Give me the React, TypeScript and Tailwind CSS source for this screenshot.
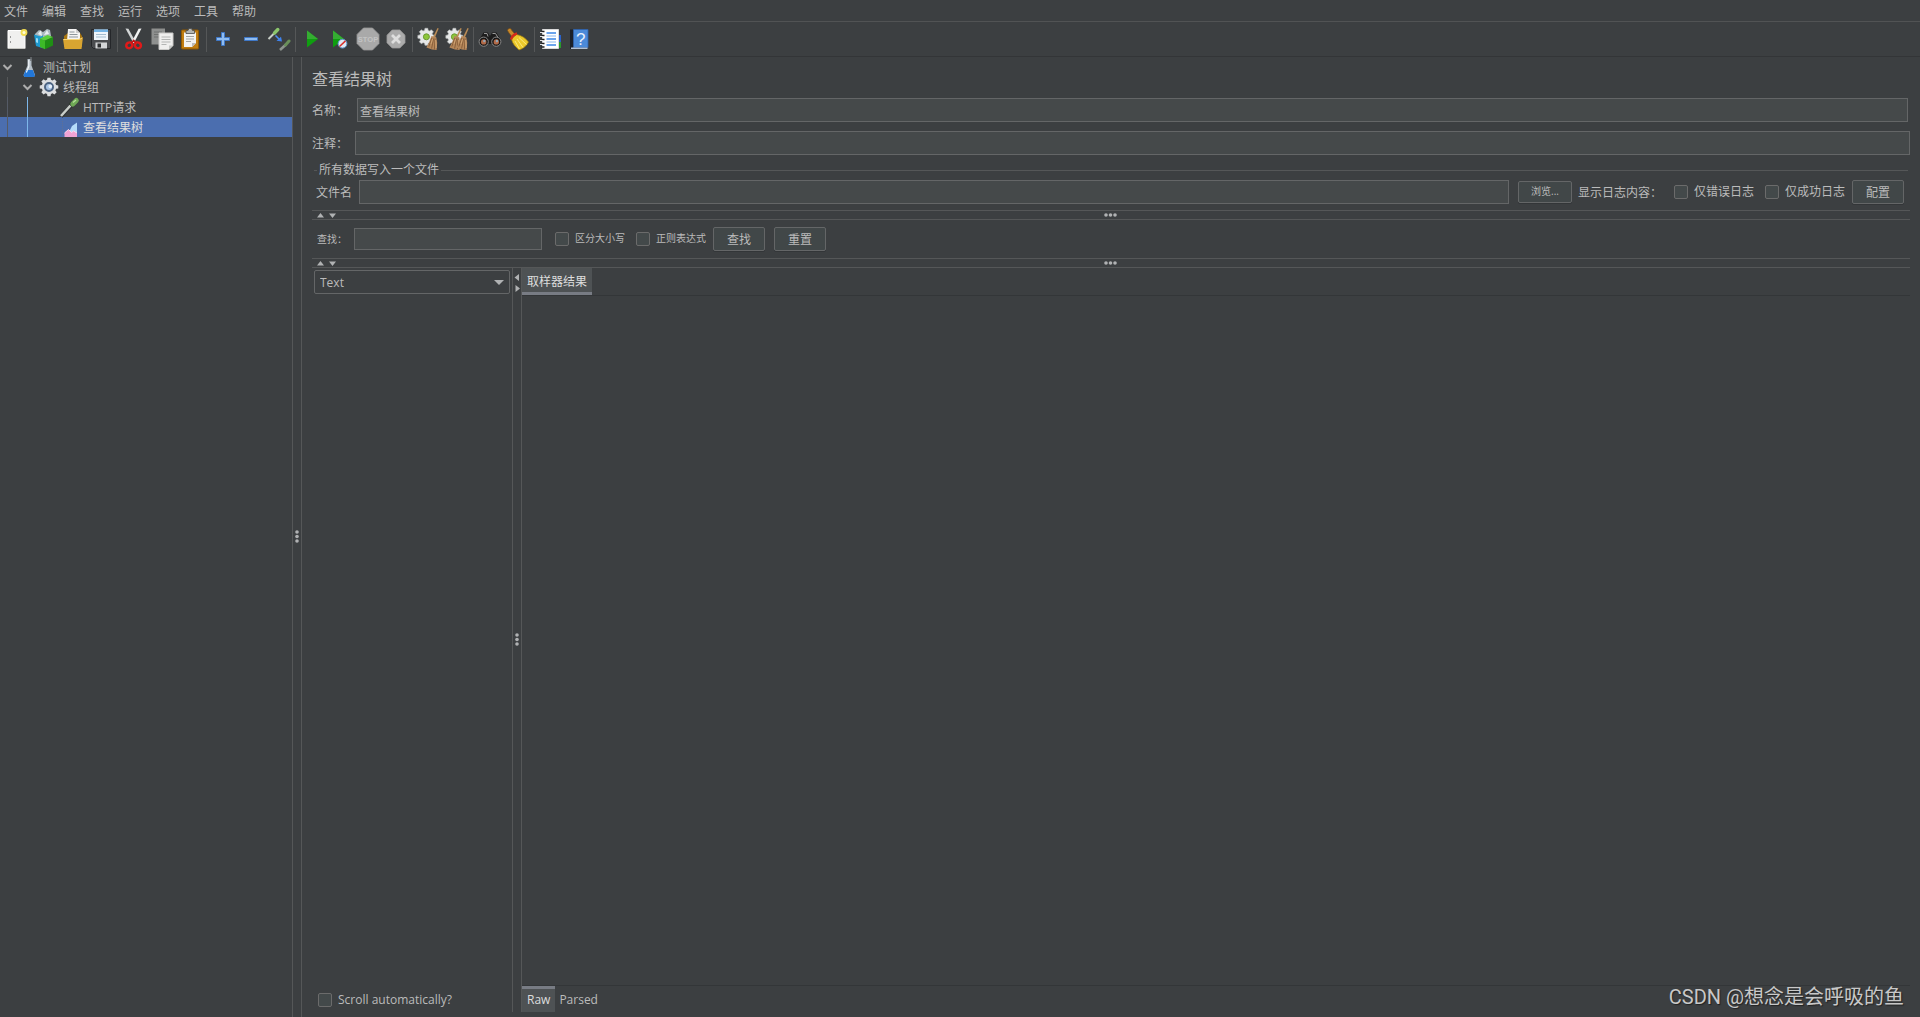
import type { ReactNode } from 'react';

type IconProps = { children: ReactNode };

const Icon = ({ children }: IconProps) => (
    <svg className="w-6 h-6" viewBox="0 0 24 24" fill="none" xmlns="http://www.w3.org/2000/svg" aria-hidden="true">
        {children}
    </svg>
);

const menus = ['文件', '编辑', '查找', '运行', '选项', '工具', '帮助'];

const gearPath =
    'M10.2 1h3.6l.5 2.6 1.9.8 2.2-1.5 2.6 2.6-1.5 2.2.8 1.9 2.6.5v3.6l-2.6.5-.8 1.9 1.5 2.2-2.6 2.6-2.2-1.5-1.9.8-.5 2.6h-3.6l-.5-2.6-1.9-.8-2.2 1.5-2.6-2.6 1.5-2.2-.8-1.9-2.6-.5v-3.6l2.6-.5.8-1.9-1.5-2.2 2.6-2.6 2.2 1.5 1.9-.8z';

const Broom = () => (
    <>
        <path d="M20.5 1l1.2.6-3.8 9-1.8-.8z" fill="#b98b55" />
        <path d="M14.5 9l4.8 1.2.9 5.500-.6 7.300-4.600-.4-5.600-2 2.600-5z" fill="#b5875a" />
        <path d="M14.8 11l-3 8.6M16.6 11.5l-2 10M18 11.5l-.6 11" stroke="#7d5532" strokeWidth=".8" />
        <path d="M15.5 12l-1.5 5M18.6 13l.6 8" stroke="#dcb07c" strokeWidth=".7" />
    </>
);

const toolGroups: { label: string; icon: ReactNode }[][] = [
    [
        {
            label: '新建',
            icon: (
                <>
                    <path d="M3 3.500h17v18H3z" fill="#f0f0ef" stroke="#fff" />
                    <path d="M3 21.500h17" stroke="#c5c5c0" />
                    <path d="M5.500 9v2M5.500 14v2" stroke="#9a9a9a" />
                    <circle cx="19" cy="5.500" r="3.400" fill="#f1dc52" />
                    <circle cx="19" cy="5.500" r="1.500" fill="#fffdd8" />
                </>
            ),
        },
        {
            label: '模板',
            icon: (
                <>
                    <path d="M2 7l4-4 4 2 4-3 3 1 1 6-8 4-8-2z" fill="#aab8be" />
                    <path d="M5 7l3-4 1 6zM11 8l3-5 2 4z" fill="#e9eff1" />
                    <path d="M1 7.5l7 2 2-1.2v13l-7-2.3z" fill="#1d9ad0" />
                    <path d="M3 11l2 .6v4.3l-2-.6z" fill="#9bdcf5" />
                    <path d="M7 11.5l5 2v8.8L7 20z" fill="#3dba27" />
                    <path d="M12 13.5l8-3.6v8.7l-8 3.7z" fill="#1f8f14" />
                    <path d="M7 11.5L14.5 8l5.5 1.9-8 3.6z" fill="#5ad03a" />
                </>
            ),
        },
        {
            label: '打开',
            icon: (
                <>
                    <path d="M3 9l4-3h12l2 3v11H3z" fill="#a87612" />
                    <path d="M7 2h8l4 4v8H6z" fill="#f4f4f4" />
                    <path d="M15 2v4h4" fill="#cfcfcf" />
                    <path d="M8.5 5h5M8.5 7.5h8M8 10h9" stroke="#8e979c" />
                    <path d="M2 12h16l4-2-1.5 12h-17z" fill="#d9a531" />
                    <path d="M2.5 12.5h16l2.5-1.4" stroke="#f7d67a" />
                </>
            ),
        },
        {
            label: '保存',
            icon: (
                <>
                    <path d="M2.500 2.500h19v19H4.500l-2-2z" fill="#4a4c4f" stroke="#25272a" />
                    <path d="M5 2.500h14v10.500H5z" fill="#eef5fb" />
                    <path d="M5 2.500h14V5H5z" fill="#75b5e6" />
                    <path d="M7 7.500h10M7 10h10" stroke="#a3bccf" />
                    <path d="M6.500 15.500h11.500v6H6.500z" fill="#d4d6d8" />
                    <path d="M8.500 16.500h3.500v4H8.500z" fill="#2d2f31" />
                </>
            ),
        },
    ],
    [
        {
            label: '剪切',
            icon: (
                <>
                    <path d="M3.500 1.500l2.900.3L13.700 15l-2.200 1.300z" fill="#d3d6d6" />
                    <path d="M19.500 1.500l-2.900.3L9.600 15l2.200 1.300z" fill="#f3f4f4" />
                    <ellipse cx="7.300" cy="18.300" rx="3.100" ry="2.800" transform="rotate(-30 7.300 18.300)" stroke="#e01919" strokeWidth="2.500" />
                    <ellipse cx="15.900" cy="18.300" rx="3.100" ry="2.800" transform="rotate(30 15.900 18.300)" stroke="#e01919" strokeWidth="2.500" />
                    <path d="M9.500 15.800l2.200-2.200 2.200 2.200" stroke="#c11212" strokeWidth="1.800" />
                </>
            ),
        },
        {
            label: '复制',
            icon: (
                <>
                    <path d="M1.500 1.500H15v16H1.500z" fill="#8e908f" />
                    <path d="M4 5h8M4 7.500h5M4 10h5" stroke="#6f7170" />
                    <path d="M9 6h14v12.500l-4 4H9z" fill="#efefee" stroke="#c9c9c7" />
                    <path d="M11.500 10h9M11.500 12.500h9M11.500 15h9M11.500 17.500h5" stroke="#b3b5b4" />
                    <path d="M23 18.500h-4v4z" fill="#c4c6c4" />
                </>
            ),
        },
        {
            label: '粘贴',
            icon: (
                <>
                    <rect x="3.500" y="3" width="17" height="19" rx="1" fill="#c17d11" stroke="#8f5902" />
                    <path d="M6 5.500h12v10.500l-4 4H6z" fill="#f3f3f2" />
                    <path d="M8 9.500h8M8 12h8M8 14.500h5" stroke="#a3a5a4" />
                    <path d="M18 16h-4v4z" fill="#bbb" />
                    <path d="M8 3.500h2l1-2h2.500l1 2h2v3H8z" fill="#b4b6b4" stroke="#4d4d4d" strokeWidth=".8" />
                </>
            ),
        },
    ],
    [
        {
            label: '展开全部',
            icon: <path d="M10.500 5.500h3v5h5v3h-5v5h-3v-5h-5v-3h5z" fill="#8fbcf0" stroke="#3f78c8" />,
        },
        {
            label: '折叠全部',
            icon: <path d="M5.500 10.500h13v3h-13z" fill="#8fbcf0" stroke="#3f78c8" />,
        },
        {
            label: '启用/禁用',
            icon: (
                <>
                    <path d="M1.500 12l6.500-6.500" stroke="#c8cfc8" strokeWidth="2" />
                    <path d="M7.500 6l3.300-3.500" stroke="#8cc66c" strokeWidth="3.400" strokeLinecap="round" />
                    <path d="M8.500 8.500l4 4" stroke="#4c8df0" strokeWidth="1.600" />
                    <path d="M15 14.500l-5.500-.7 4.500-4z" fill="#3f84ee" />
                    <path d="M13 23l6-5.500" stroke="#8e958f" strokeWidth="2.600" />
                    <path d="M18.500 18l3.500-4" stroke="#6a8f5a" strokeWidth="3" strokeLinecap="round" />
                </>
            ),
        },
    ],
    [
        {
            label: '启动',
            icon: (
                <>
                    <path d="M7 3.500v17L18 12z" fill="#0f9e10" />
                    <path d="M7 3.500V12h11z" fill="#35ad32" />
                </>
            ),
        },
        {
            label: '不停顿开始',
            icon: (
                <>
                    <path d="M5 3.500v17L16 12z" fill="#0f9e10" />
                    <path d="M5 3.500V12h11z" fill="#35ad32" />
                    <circle cx="14.500" cy="16.700" r="4.400" fill="#dfeaf5" stroke="#5d93c9" />
                    <path d="M11.500 19.500l6-5.600" stroke="#d9312b" strokeWidth="1.500" />
                </>
            ),
        },
        {
            label: '停止',
            icon: (
                <>
                    <path d="M7.500 1h9L23 7.500v9L16.500 23h-9L1 16.500v-9z" fill="#a9a9a9" stroke="#979797" strokeWidth=".8" />
                    <text x="12" y="15" textAnchor="middle" fontSize="7.500" fontWeight="700" fontFamily="Liberation Sans, sans-serif" fill="#c4c4c4">
                        STOP
                    </text>
                </>
            ),
        },
        {
            label: '关闭',
            icon: (
                <>
                    <path d="M8.200 3h7.600L21 8.200v7.600L15.800 21H8.200L3 15.800V8.200z" fill="#ababab" stroke="#999" strokeWidth=".8" />
                    <path d="M8 8l8 8M16 8l-8 8" stroke="#dedede" strokeWidth="2.800" />
                </>
            ),
        },
    ],
    [
        {
            label: '清除',
            icon: (
                <>
                    <path d={gearPath} transform="translate(0 .5) scale(.78)" fill="#e6e8e8" stroke="#b7b9b9" strokeWidth=".8" />
                    <circle cx="9.400" cy="9.800" r="3" fill="#8cc63a" stroke="#6b9a33" />
                    <Broom />
                </>
            ),
        },
        {
            label: '清除全部',
            icon: (
                <>
                    <path d={gearPath} transform="translate(0 .5) scale(.78)" fill="#e6e8e8" stroke="#b7b9b9" strokeWidth=".8" />
                    <circle cx="9.400" cy="9.800" r="3" fill="#8cc63a" stroke="#6b9a33" />
                    <g transform="translate(-5 0)">
                        <Broom />
                    </g>
                    <g transform="translate(2 0)">
                        <Broom />
                    </g>
                </>
            ),
        },
    ],
    [
        {
            label: '搜索',
            icon: (
                <>
                    <path d="M5.500 5.500h4.500l1.500 3h1l1.500-3h4.500L23 13v4H1v-4z" fill="#1c1c1c" />
                    <path d="M6 6.500h3l1 3M14.500 6.500h3l2.500 4" stroke="#9a9a9a" />
                    <circle cx="5.700" cy="14.700" r="4.600" fill="#161616" stroke="#8a8a8a" />
                    <circle cx="18.300" cy="14.700" r="4.600" fill="#161616" stroke="#8a8a8a" />
                    <circle cx="5.700" cy="14.900" r="2.700" fill="#b26a48" />
                    <circle cx="18.300" cy="14.900" r="2.700" fill="#b26a48" />
                    <circle cx="6.300" cy="14" r="1.200" fill="#8fa6b8" />
                    <circle cx="18.900" cy="14" r="1.200" fill="#8fa6b8" />
                </>
            ),
        },
        {
            label: '重置搜索',
            icon: (
                <>
                    <path d="M1.500 3.500C2 1 5 .8 5.500 3L10.500 9l-3 2.500L3 6z" fill="#c98a2d" stroke="#7d4f12" strokeWidth=".7" />
                    <path d="M10.500 7.500c5 .8 9 3.500 12 7.500-1.500 3.500-5.500 7-9.500 8-3-3-6.500-5.500-7.500-11z" fill="#ecc92b" stroke="#9b7a0d" strokeWidth=".7" />
                    <path d="M9 14l4.500 8M11 12l6 8.500M13 10.500l7.500 7" stroke="#fbea83" strokeWidth=".9" />
                    <path d="M5 12.500c.8-3 3-5.200 6-6" stroke="#d42a1b" strokeWidth="2.400" />
                </>
            ),
        },
    ],
    [
        {
            label: '函数助手对话框',
            icon: (
                <>
                    <path d="M19 8h3v7h-3z" fill="#2a62c8" />
                    <path d="M19 15h3v6h-3z" fill="#2a9a2d" />
                    <path d="M3.500 2.500h16v19h-16z" fill="#fff" stroke="#dadada" />
                    <path d="M7.500 6h9.500M7.500 12h9.500M7.500 18h9.500" stroke="#3b86e6" strokeWidth="1.300" />
                    <path d="M7.500 9h9.500M7.500 15h9.500" stroke="#8db8ee" />
                    <path d="M2.500 4.500h3M2.500 8.500h3M2.500 12.500h3M2.500 16.500h3M2.500 20h3" stroke="#222" strokeWidth="1.500" />
                    <path d="M1 5.500h3M1 9.500h3M1 13.500h3M1 17.500h3" stroke="#e4e4e4" />
                </>
            ),
        },
        {
            label: '帮助文档',
            icon: (
                <>
                    <path d="M3 2.500h4v19.500H3z" fill="#1b2029" />
                    <path d="M6.500 2.500H21v18H6.500z" fill="#4b8ad9" stroke="#2e62ad" strokeWidth=".8" />
                    <path d="M4 20.500h16.500v1.500H4z" fill="#aebfd4" />
                    <text x="13.800" y="17.500" textAnchor="middle" fontSize="17" fontFamily="Liberation Sans, sans-serif" fill="#e8f1fc">
                        ?
                    </text>
                </>
            ),
        },
    ],
];

const FlaskIcon = () => (
    <Icon>
        <path d="M10.500 4h4v6.500l3.500 9.500-1 2H7.500l-1-2 4-9.500z" fill="#b3bdc6" />
        <path d="M8.800 15h7l2.200 5.500-1 1.500H7.500l-1-1.500z" fill="#2277d8" />
        <path d="M11.800 5v6.500l-2.500 6" stroke="#f3f7fa" strokeWidth="1.200" />
        <path d="M14 2v4" stroke="#6b7073" strokeWidth="1.500" />
    </Icon>
);

const GearIcon = () => (
    <Icon>
        <path d={gearPath} transform="translate(1.800 1.800) scale(.85)" fill="#dcdee0" />
        <circle cx="12" cy="12" r="4" fill="#a9c4e4" stroke="#4d6482" strokeWidth="2" />
        <circle cx="13.300" cy="11.400" r="1.800" fill="#e6f0fa" />
    </Icon>
);

const PipetteIcon = () => (
    <Icon>
        <path d="M4 21.500l10-11" stroke="#2f3133" strokeWidth="4" />
        <path d="M4 21l9.500-10.500" stroke="#c9cec9" strokeWidth="2.600" />
        <path d="M12.500 8l4 4" stroke="#2f3a2d" strokeWidth="2" />
        <path d="M15.800 9l3.500-3.500" stroke="#6fa856" strokeWidth="5" strokeLinecap="round" />
        <path d="M16 7.500l3-2.500" stroke="#b8e09c" strokeWidth="1.200" />
    </Icon>
);

const ResultsIcon = () => (
    <Icon>
        <path d="M5.500 4v18" stroke="#5f7095" strokeDasharray="1 1" />
        <path d="M12 17l3-6 5-3.500V19h-8z" fill="#b5dcfa" />
        <path d="M7.500 22v-4l4-3.500 3 3 2-1.500 3.500 2v4z" fill="#f0a3d4" />
        <path d="M7.500 18l4-3.500 3 3 2-1.500 3.500 2" stroke="#fbd9ee" />
    </Icon>
);

const Chevron = () => (
    <svg className="w-3.5 h-3.5" viewBox="0 0 14 14" fill="none" xmlns="http://www.w3.org/2000/svg" aria-hidden="true">
        <path d="M3.500 5l4 4 4-4" stroke="#adadad" strokeWidth="2" />
    </svg>
);

// collapse arrows and grip of a horizontal divider
const SplitBar = () => (
    <div className="relative flex h-2.5 shrink-0 items-center border-y border-[#555758] pl-[5px]">
        <svg className="w-5 h-2" viewBox="0 0 20 8" fill="#b0b2b3" xmlns="http://www.w3.org/2000/svg" aria-hidden="true">
            <path d="M0 6.500h7L3.500 2zM12 2.500h7L15.500 7z" />
        </svg>
        <svg className="absolute left-1/2 top-0 w-3.5 h-2 -translate-x-1/2" viewBox="0 0 14 8" fill="#b0b2b3" aria-hidden="true">
            <circle cx="2" cy="4" r="1.800" />
            <circle cx="6.500" cy="4" r="1.800" />
            <circle cx="11" cy="4" r="1.800" />
        </svg>
    </div>
);

type SplitProps = { arrows?: boolean };

const VerticalSplit = ({ arrows }: SplitProps) => (
    <div className="relative flex w-2.5 shrink-0 items-center justify-center border-x border-[#555758]">
        {arrows && (
            <svg className="absolute left-0 top-1.5 w-2 h-5" viewBox="0 0 8 20" fill="#b0b2b3" aria-hidden="true">
                <path d="M6 0v7L1.500 3.500zM2.500 11v7L7 14.500z" />
            </svg>
        )}
        <svg className="w-2 h-3.5" viewBox="0 0 8 14" fill="#b0b2b3" aria-hidden="true">
            <circle cx="4" cy="2" r="1.800" />
            <circle cx="4" cy="6.500" r="1.800" />
            <circle cx="4" cy="11" r="1.800" />
        </svg>
    </div>
);

type CheckProps = { label: string; small?: boolean };

const Check = ({ label, small }: CheckProps) => (
    <label className={`flex items-center gap-1.5 whitespace-nowrap ${small ? 'text-[10px]' : ''}`}>
        <input type="checkbox" className="size-3.5 shrink-0 appearance-none rounded-xs border border-[#6b6b6b] bg-[#43494a] checked:bg-[#4b6eaf]" />
        {label}
    </label>
);

const inputClass = 'h-6 min-w-0 flex-1 border border-[#646667] bg-[#45494a] px-0.5 pt-0.5 outline-none';
const buttonClass = 'h-6 w-[52px] rounded-xs border border-[#646667] bg-[#414748] pt-0.5 shadow-[0_1px_0_#333638]';

const App = () => {
    return (
        <div className="relative flex h-screen flex-col overflow-hidden bg-[#3c3f41] font-['Open_Sans','Noto_Sans_CJK_SC',sans-serif] text-xs text-[#bbbbbb]">
            <nav className="flex h-[22px] shrink-0 items-center gap-3.5 border-b border-[#515354] px-1 pt-0.5">
                {menus.map((menu) => (
                    <button key={menu} type="button">
                        {menu}
                    </button>
                ))}
            </nav>

            {/* Toolbar */}
            <div className="flex h-[35px] shrink-0 items-center border-b border-[#333537] pl-[3px]" role="toolbar">
                {toolGroups.map((group, i) => (
                    <div key={group[0].label} className="flex items-center">
                        {i > 0 && <div className="mx-0.5 h-[25px] w-px bg-[#555758]" />}
                        {group.map((tool) => (
                            <button key={tool.label} type="button" aria-label={tool.label} className="flex w-7 items-center justify-center">
                                <Icon>{tool.icon}</Icon>
                            </button>
                        ))}
                    </div>
                ))}
            </div>

            <div className="flex min-h-0 flex-1">
                {/* Test plan tree */}
                <aside className="w-[292px] shrink-0">
                    <div className="flex h-5 items-center">
                        <Chevron />
                        <span className="ml-[3px]">
                            <FlaskIcon />
                        </span>
                        <span className="ml-0.5 pt-0.5">测试计划</span>
                    </div>
                    <div className="ml-[7px] border-l border-[#555758]">
                        <div className="flex h-5 items-center pl-3">
                            <Chevron />
                            <span className="ml-[3px]">
                                <GearIcon />
                            </span>
                            <span className="ml-0.5 pt-0.5">线程组</span>
                        </div>
                    </div>
                    <div className="relative">
                        <div className="flex h-5 items-center pl-[57px]">
                            <PipetteIcon />
                            <span className="ml-0.5 pt-0.5">HTTP请求</span>
                        </div>
                        <div className="flex h-5 items-center bg-[#4b6eaf] pl-[57px] text-[#dddddd]">
                            <ResultsIcon />
                            <span className="ml-0.5 pt-0.5">查看结果树</span>
                        </div>
                        <div className="absolute inset-y-0 left-[7px] w-px bg-[#555b66]" />
                        <div className="absolute inset-y-0 left-[27px] w-px bg-[#7db7ea]" />
                    </div>
                </aside>

                <VerticalSplit />

                <main className="flex min-w-0 flex-1 flex-col pl-2.5 pr-2.5 pb-[5px]">
                    <h1 className="mt-2.5 h-6 text-base leading-6">查看结果树</h1>

                    <div className="mt-[7px] flex items-center pr-0.5">
                        <label htmlFor="name" className="w-[45px] shrink-0 pt-0.5">
                            名称：
                        </label>
                        <input id="name" type="text" defaultValue="查看结果树" className={inputClass} />
                    </div>
                    <div className="mt-[9px] flex items-center">
                        <label htmlFor="comment" className="w-[43px] shrink-0 pt-0.5">
                            注释：
                        </label>
                        <input id="comment" type="text" className={inputClass} />
                    </div>

                    {/* Write results to file */}
                    <section className="mt-[5px] pr-0.5">
                        <h2 className="flex h-5 items-center pl-0.5">
                            <span className="h-px w-[3px] bg-[#555758]" />
                            <span className="px-0.5">所有数据写入一个文件</span>
                            <span className="h-px flex-1 bg-[#555758]" />
                        </h2>
                        <div className="flex items-center px-1">
                            <label htmlFor="filename" className="w-[43px] shrink-0 pt-0.5">
                                文件名
                            </label>
                            <input id="filename" type="text" className={inputClass} />
                            <button
                                type="button"
                                className="ml-[9px] h-[22px] w-[54px] rounded-xs border border-[#646667] bg-[#414748] text-[10px] shadow-[0_1px_0_#333638]"
                            >
                                浏览...
                            </button>
                            <span className="ml-1.5 w-24 whitespace-nowrap pt-0.5">显示日志内容：</span>
                            <div className="flex gap-[11px]">
                                <Check label="仅错误日志" />
                                <Check label="仅成功日志" />
                            </div>
                            <button type="button" className={`ml-[7px] ${buttonClass}`}>
                                配置
                            </button>
                        </div>
                    </section>

                    <div className="mt-1.5 flex flex-col">
                        <SplitBar />
                    </div>

                    {/* Search */}
                    <div className="flex h-[38px] shrink-0 items-center pl-[5px]">
                        <label htmlFor="search" className="w-[37px] whitespace-nowrap pt-0.5 text-[10px]">
                            查找：
                        </label>
                        <input id="search" type="text" className="h-[22px] w-[188px] border border-[#646667] bg-[#45494a] px-0.5 outline-none" />
                        <div className="ml-[13px] flex gap-[11px]">
                            <Check label="区分大小写" small />
                            <Check label="正则表达式" small />
                        </div>
                        <button type="button" className={`ml-[7px] ${buttonClass}`}>
                            查找
                        </button>
                        <button type="button" className={`ml-[9px] ${buttonClass}`}>
                            重置
                        </button>
                    </div>

                    <SplitBar />

                    <div className="flex min-h-0 flex-1">
                        <div className="flex w-[200px] shrink-0 flex-col justify-between pl-0.5 pt-0.5">
                            <div className="relative w-[196px]">
                                <select aria-label="Renderer" className="h-6 w-full appearance-none rounded-xs border border-[#646667] bg-[#3c3f41] px-[5px] pt-0.5 outline-none">
                                    <option>Text</option>
                                </select>
                                <svg className="pointer-events-none absolute right-1.5 top-2 w-2.5 h-2" viewBox="0 0 10 8" fill="#b0b2b3" aria-hidden="true">
                                    <path d="M0 2h10L5 7z" />
                                </svg>
                            </div>
                            <div className="flex pb-1 pl-1">
                                <Check label="Scroll automatically?" />
                            </div>
                        </div>

                        <VerticalSplit arrows />

                        <div className="flex min-w-0 flex-1 flex-col">
                            <div className="flex border-b border-[#333638]" role="tablist">
                                <button type="button" role="tab" className="h-[27px] border-b-[3px] border-[#787c84] bg-[#4e5254] px-[5px] pt-1 text-[#dddddd]">
                                    取样器结果
                                </button>
                            </div>
                            <div className="flex-1" />
                            <div className="flex border-t border-[#333638]" role="tablist">
                                <button type="button" role="tab" className="h-[26px] border-t-[3px] border-[#787c84] bg-[#4e5254] px-[5px] pb-0.5 text-[#dddddd]">
                                    Raw
                                </button>
                                <button type="button" role="tab" className="h-[26px] border-t-[3px] border-transparent px-1 pb-0.5">
                                    Parsed
                                </button>
                            </div>
                        </div>
                    </div>
                </main>
            </div>

            <div className="pointer-events-none absolute bottom-1.5 right-4 font-['Roboto','Noto_Sans_CJK_SC',sans-serif] text-xl leading-7 text-[#c8c8c8] [text-shadow:1px_1px_1px_#222]">
                CSDN @想念是会呼吸的鱼
            </div>
        </div>
    );
};

export default App;
